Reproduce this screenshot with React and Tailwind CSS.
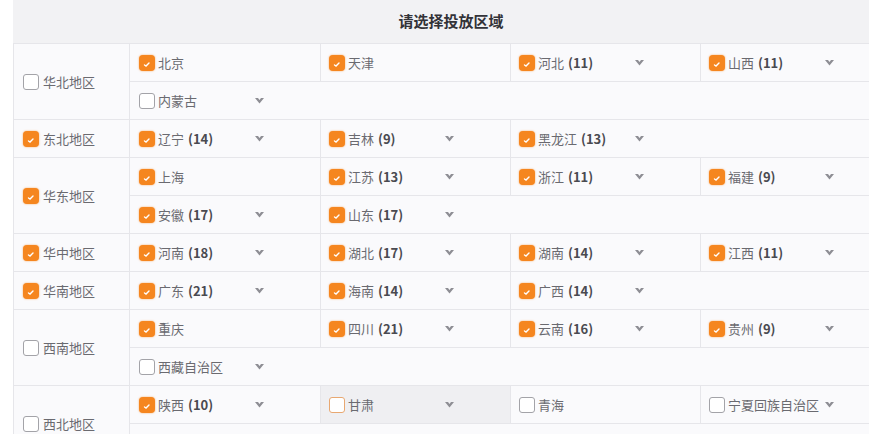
import React from "react";

const REGIONS = [
  {
    name: "华北地区",
    checked: false,
    rows: [
      [
        { name: "北京", checked: true },
        { name: "天津", checked: true },
        { name: "河北", count: 11, checked: true, arrow: true },
        { name: "山西", count: 11, checked: true, arrow: true },
      ],
      [{ name: "内蒙古", checked: false, arrow: true }],
    ],
  },
  {
    name: "东北地区",
    checked: true,
    rows: [
      [
        { name: "辽宁", count: 14, checked: true, arrow: true },
        { name: "吉林", count: 9, checked: true, arrow: true },
        { name: "黑龙江", count: 13, checked: true, arrow: true },
      ],
    ],
  },
  {
    name: "华东地区",
    checked: true,
    rows: [
      [
        { name: "上海", checked: true },
        { name: "江苏", count: 13, checked: true, arrow: true },
        { name: "浙江", count: 11, checked: true, arrow: true },
        { name: "福建", count: 9, checked: true, arrow: true },
      ],
      [
        { name: "安徽", count: 17, checked: true, arrow: true },
        { name: "山东", count: 17, checked: true, arrow: true },
      ],
    ],
  },
  {
    name: "华中地区",
    checked: true,
    rows: [
      [
        { name: "河南", count: 18, checked: true, arrow: true },
        { name: "湖北", count: 17, checked: true, arrow: true },
        { name: "湖南", count: 14, checked: true, arrow: true },
        { name: "江西", count: 11, checked: true, arrow: true },
      ],
    ],
  },
  {
    name: "华南地区",
    checked: true,
    rows: [
      [
        { name: "广东", count: 21, checked: true, arrow: true },
        { name: "海南", count: 14, checked: true, arrow: true },
        { name: "广西", count: 14, checked: true, arrow: true },
      ],
    ],
  },
  {
    name: "西南地区",
    checked: false,
    rows: [
      [
        { name: "重庆", checked: true },
        { name: "四川", count: 21, checked: true, arrow: true },
        { name: "云南", count: 16, checked: true, arrow: true },
        { name: "贵州", count: 9, checked: true, arrow: true },
      ],
      [{ name: "西藏自治区", checked: false, arrow: true }],
    ],
  },
  {
    name: "西北地区",
    checked: false,
    rows: [
      [
        { name: "陕西", count: 10, checked: true, arrow: true },
        { name: "甘肃", checked: false, arrow: true, hover: true },
        { name: "青海", checked: false },
        { name: "宁夏回族自治区", checked: false, arrow: true },
      ],
      [],
    ],
  },
];

function Box({ checked, hover }) {
  if (checked) {
    return (
      <span className="w-4 h-4 shrink-0 rounded-[4px] bg-[#f5861f] shadow-[0_0_2px_rgba(245,134,31,0.7)] flex items-center justify-center">
        <svg width="16" height="16" viewBox="0 0 16 16">
          <path d="M5.5 10 L7 11 L10 8" stroke="#fff" strokeWidth="1.4" fill="none" strokeLinecap="round" />
        </svg>
      </span>
    );
  }
  return (
    <span
      className={
        "w-4 h-4 shrink-0 rounded-[3px] bg-white border " +
        (hover ? "border-[#e8a872]" : "border-[#a3a3a8]")
      }
    />
  );
}

function Arrow() {
  return (
    <svg width="9" height="6" viewBox="0 0 9 6" className="ml-[6px] shrink-0">
      <polygon points="0,0 3,0 4.5,2 6,0 9,0 4.5,5.5" fill="#8e8e94" />
    </svg>
  );
}

function Cell({ item, first }) {
  return (
    <div
      className={
        "w-[190px] shrink-0 h-full flex items-center " +
        (first ? "pl-[9px] " : "pl-[8px] border-l border-[#e6e6ea] ") +
        (item.hover ? "bg-[#efeff2]" : "")
      }
    >
      <Box checked={item.checked} hover={item.hover} />
      <span className="ml-[3px] min-w-[91px] text-[13px] text-[#6a6a70] whitespace-nowrap">
        {item.name}
        {item.count != null && (
          <span className="ml-1 font-semibold text-[#4a4a50]">({item.count})</span>
        )}
      </span>
      {item.arrow && <Arrow />}
    </div>
  );
}

export default function App() {
  return (
    <div className="w-[869px] h-[434px] overflow-hidden bg-white font-['Noto_Sans_CJK_SC',sans-serif]">
      <div className="ml-[13px] w-[876px]">
        <div className="h-[44px] bg-[#f2f2f4] border-b border-[#e6e6ea] flex items-center justify-center">
          <span className="text-[15px] font-bold text-[#333338]">请选择投放区域</span>
        </div>

        {REGIONS.map((region) => (
          <div key={region.name} className="flex bg-[#fafafc]">
            <div className="w-[117px] shrink-0 border-l border-r border-b border-[#e6e6ea] flex items-center pl-[9px]">
              <Box checked={region.checked} />
              <span className="ml-1 text-[13px] text-[#6a6a70]">{region.name}</span>
            </div>
            <div className="flex-1 flex flex-col">
              {region.rows.map((row, i) => (
                <div key={i} className="h-[38px] flex border-b border-[#e6e6ea]">
                  {row.map((item, j) => (
                    <Cell key={item.name} item={item} first={j === 0} />
                  ))}
                </div>
              ))}
            </div>
          </div>
        ))}
      </div>
    </div>
  );
}
